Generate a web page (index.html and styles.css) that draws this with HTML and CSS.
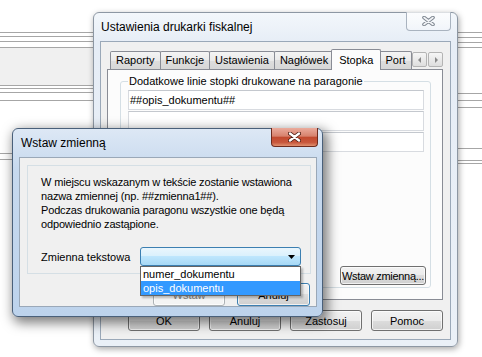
FILE: index.html
```html
<!DOCTYPE html>
<html lang="pl">
<head>
  <meta charset="UTF-8">
  <meta name="viewport" content="width=device-width, initial-scale=1">
  <title>Ustawienia drukarki fiskalnej</title>
  <link rel="stylesheet" href="styles.css">
</head>
<body>
  <!-- Grid of the application behind the windows -->
  <div class="strip strip-left"></div>
  <div class="strip strip-right"></div>

  <!-- Printer settings window (inactive) -->
  <div class="win win-main">
    <div class="titlebar">
      <span class="title">Ustawienia drukarki fiskalnej</span>
      <div class="close close-off">
        <svg width="13" height="10" viewBox="0 0 13 10"><path d="M2 1.5L11 8.5M11 1.5L2 8.5" stroke="#7e8690" stroke-width="3.6" stroke-linecap="round"/><path d="M2 1.5L11 8.5M11 1.5L2 8.5" stroke="#f2f4f7" stroke-width="1.6" stroke-linecap="round"/></svg>
      </div>
    </div>
    <div class="client main-client">
      <div class="tabs">
        <div class="tab">Raporty</div>
        <div class="tab">Funkcje</div>
        <div class="tab">Ustawienia</div>
        <div class="tab">Nagłówek</div>
        <div class="tab tab-on">Stopka</div>
        <div class="tab">Port</div>
        <div class="tab-arrows">
          <span class="arr"><svg width="4" height="6" viewBox="0 0 4 6"><path d="M3 0V6L0 3Z" fill="#8a8a8a"/></svg></span>
          <span class="arr"><svg width="4" height="6" viewBox="0 0 4 6"><path d="M1 0V6L4 3Z" fill="#8a8a8a"/></svg></span>
        </div>
      </div>
      <div class="tabpage">
        <fieldset class="group">
          <legend>Dodatkowe linie stopki drukowane na paragonie</legend>
          <div class="field">##opis_dokumentu##</div>
          <div class="field"></div>
          <div class="field"></div>
          <button class="btn btn-insert">Wstaw zmienną...</button>
        </fieldset>
      </div>
      <div class="buttons">
        <button class="btn">OK</button>
        <button class="btn">Anuluj</button>
        <button class="btn">Zastosuj</button>
        <button class="btn">Pomoc</button>
      </div>
    </div>
  </div>

  <!-- Insert variable dialog (active) -->
  <div class="win win-dialog">
    <div class="titlebar">
      <span class="title">Wstaw zmienną</span>
      <div class="close close-on">
        <svg width="13" height="10" viewBox="0 0 13 10"><path d="M2 1.5L11 8.5M11 1.5L2 8.5" stroke="#4a1a10" stroke-width="4" stroke-linecap="round"/><path d="M2 1.5L11 8.5M11 1.5L2 8.5" stroke="#fff" stroke-width="2.4" stroke-linecap="round"/></svg>
      </div>
    </div>
    <div class="client">
      <div class="dlg-panel">
        <p class="msg">W miejscu wskazanym w tekście zostanie wstawiona<br>nazwa zmiennej (np. ##zmienna1##).<br>Podczas drukowania paragonu wszystkie one będą<br>odpowiednio zastąpione.</p>
        <div class="var-row">
          <span class="var-label">Zmienna tekstowa</span>
          <div class="combo">
            <svg width="7" height="4" viewBox="0 0 7 4"><path d="M0 0H7L3.5 4Z" fill="#000"/></svg>
            <ul class="droplist">
              <li>numer_dokumentu</li>
              <li class="sel">opis_dokumentu</li>
            </ul>
          </div>
        </div>
      </div>
      <div class="dlg-buttons">
        <button class="btn btn-big btn-off">Wstaw</button>
        <button class="btn btn-big btn-default">Anuluj</button>
      </div>
    </div>
  </div>
</body>
</html>
```

FILE: styles.css
```css
/* Page */
body {
  margin: 0;
  width: 482px;
  height: 357px;
  position: relative;
  overflow: hidden;
  background: #fff;
  font-family: "Liberation Sans", Arial, sans-serif;
  font-size: 11px;
  color: #000;
  display: flex;
  justify-content: space-between;
}

/* Background grid lines */
.strip {
  height: 357px;
}

.strip-left {
  width: 93px;
  background:
    linear-gradient(#a6a6a6, #a6a6a6) 0 32px / 100% 1px no-repeat,
    linear-gradient(#a6a6a6, #a6a6a6) 0 36px / 100% 1px no-repeat,
    linear-gradient(#a6a6a6, #a6a6a6) 0 41px / 100% 1px no-repeat,
    linear-gradient(#a6a6a6, #a6a6a6) 0 47px / 100% 1px no-repeat,
    linear-gradient(#a6a6a6, #a6a6a6) 0 85px / 100% 1px no-repeat,
    linear-gradient(#a6a6a6, #a6a6a6) 0 88px / 100% 1px no-repeat,
    linear-gradient(#a6a6a6, #a6a6a6) 0 92px / 100% 1px no-repeat,
    linear-gradient(#a6a6a6, #a6a6a6) 0 100px / 100% 1px no-repeat,
    linear-gradient(#a6a6a6, #a6a6a6) 0 153px / 100% 1px no-repeat,
    linear-gradient(#a6a6a6, #a6a6a6) 0 159px / 100% 1px no-repeat,
    linear-gradient(#f0f0f0, #f0f0f0) 0 48px / 100% 37px no-repeat;
}

.strip-right {
  width: 24px;
  background:
    linear-gradient(#a6a6a6, #a6a6a6) 0 32px / 100% 1px no-repeat,
    linear-gradient(#a6a6a6, #a6a6a6) 0 37px / 100% 1px no-repeat,
    linear-gradient(#a6a6a6, #a6a6a6) 0 42px / 100% 1px no-repeat,
    linear-gradient(#a6a6a6, #a6a6a6) 0 47px / 100% 1px no-repeat,
    linear-gradient(#a6a6a6, #a6a6a6) 0 93px / 100% 1px no-repeat,
    linear-gradient(#a6a6a6, #a6a6a6) 0 100px / 100% 1px no-repeat,
    linear-gradient(#a6a6a6, #a6a6a6) 0 107px / 100% 1px no-repeat,
    linear-gradient(#a6a6a6, #a6a6a6) 0 148px / 100% 1px no-repeat,
    linear-gradient(#a6a6a6, #a6a6a6) 0 160px / 100% 1px no-repeat,
    linear-gradient(#a6a6a6, #a6a6a6) 0 163px / 100% 1px no-repeat;
}

/* Window frames */
.win {
  position: absolute;
  box-sizing: border-box;
  display: flex;
  flex-direction: column;
  border: 1px solid;
  border-radius: 6px;
}

.win-main {
  left: 93px;
  top: 12px;
  width: 365px;
  height: 335px;
  padding: 0 6px 6px;
  border-color: #8d97a3;
  background: linear-gradient(#f3f7fb, #e6edf6 30px, #eaf0f7);
  box-shadow: 1px 2px 6px rgba(0, 0, 0, .35);
}

.win-dialog {
  left: 12px;
  top: 128px;
  width: 311px;
  height: 189px;
  padding: 0 5px 9px 6px;
  border-color: #4a607a;
  background: linear-gradient(#dde8f5, #c7d9ee 40px, #bdd3ec);
  box-shadow: 3px 4px 12px 2px rgba(0, 0, 0, .5);
}

.titlebar {
  height: 28px;
  flex-shrink: 0;
  display: flex;
  justify-content: space-between;
}

.title {
  align-self: center;
  font-size: 12px;
}

.win-main .title {
  padding-left: 1px;
}

.win-dialog .title {
  padding-left: 2px;
}

.close {
  box-sizing: border-box;
  height: 19px;
  margin-top: -1px;
  display: flex;
  align-items: center;
  justify-content: center;
  border: 1px solid;
  border-top: none;
  border-radius: 0 0 4px 4px;
}

.close-off {
  width: 45px;
  border-color: #a9b3bf;
  background: linear-gradient(rgba(255, 255, 255, .7), rgba(255, 255, 255, .25));
}

.close-on {
  width: 47px;
  margin-right: -1px;
  border-color: #6e2b1d;
  background: linear-gradient(#eaab9c, #d7826d 45%, #c24a2f 52%, #c8573c 80%, #e0906f);
}

.client {
  flex: 1;
  display: flex;
  flex-direction: column;
  border: 1px solid #9aa8b8;
  background: #f0f0f0;
}

/* Tabs */
.tabs {
  position: relative;
  z-index: 1;
  height: 21px;
  margin: 7px 7px 0 6px;
  padding-left: 3px;
  display: flex;
  align-items: flex-end;
  overflow: hidden;
}

.tab {
  box-sizing: border-box;
  height: 18px;
  margin: 0 -1px 1px 0;
  padding: 0 5px;
  line-height: 17px;
  white-space: nowrap;
  border: 1px solid #898c95;
  border-bottom: none;
  border-radius: 2px 2px 0 0;
  background: linear-gradient(#f4f4f4, #eaeaea 50%, #dedede 50%, #d7d7d7);
}

.tab-on {
  position: relative;
  z-index: 2;
  height: 21px;
  margin: 0 -2px 0 -2px;
  padding: 0 7px;
  line-height: 20px;
  background: #fcfcfc;
}

.tab-arrows {
  position: absolute;
  z-index: 3;
  right: 0;
  top: 3px;
  display: flex;
  gap: 1px;
}

.arr {
  box-sizing: border-box;
  width: 15px;
  height: 15px;
  display: flex;
  align-items: center;
  justify-content: center;
  border: 1px solid #b4b4b4;
  border-radius: 2px;
  background: linear-gradient(#f6f6f6, #dedede);
}

.tabpage {
  flex: 1;
  margin: -1px 7px 0 6px;
  display: flex;
  flex-direction: column;
  border: 1px solid #898c95;
  background: #fcfcfc;
}

/* Group box */
.group {
  flex: 1;
  min-width: 0;
  margin: 5px 11px 11px 12px;
  padding: 2px 6px 2px 7px;
  display: flex;
  flex-direction: column;
  border: 1px solid #d5dfe5;
  border-radius: 3px;
}

.group legend {
  padding: 0 1px;
  line-height: 13px;
}

.field {
  box-sizing: border-box;
  height: 20px;
  margin-bottom: 1px;
  padding-left: 1px;
  line-height: 18px;
  border: 1px solid #d8dbe0;
  border-top-color: #c4c8ce;
  background: #fff;
}

/* Buttons */
.btn {
  box-sizing: border-box;
  width: 72px;
  height: 21px;
  padding: 0;
  border: 1px solid #707070;
  border-radius: 3px;
  background: linear-gradient(#f2f2f2, #ebebeb 50%, #dddddd 50%, #cfcfcf);
  box-shadow: inset 0 0 0 1px rgba(255, 255, 255, .7);
  font: 11px "Liberation Sans", Arial, sans-serif;
  color: #000;
}

.btn-insert {
  width: 86px;
  height: 19px;
  margin: auto -2px 0 0;
  align-self: flex-end;
  letter-spacing: -0.3px;
  white-space: nowrap;
}

.buttons {
  display: flex;
  justify-content: flex-end;
  gap: 9px;
  margin: 10px 7px 8px 0;
}

/* Insert variable dialog */
.dlg-panel {
  box-sizing: border-box;
  height: 109px;
  margin: 7px 5px 0 7px;
  padding: 9px 0 0 13px;
  border: 1px solid #d5dfe5;
}

.msg {
  margin: 0;
  line-height: 14px;
  letter-spacing: -0.15px;
}

.var-row {
  display: flex;
  align-items: center;
  margin-top: 16px;
}

.var-label {
  width: 99px;
}

.combo {
  position: relative;
  box-sizing: border-box;
  width: 161px;
  height: 19px;
  padding-right: 5px;
  display: flex;
  align-items: center;
  justify-content: flex-end;
  border: 1px solid #3c7fb1;
  border-radius: 3px;
  background: linear-gradient(#eaf6fd, #d9f0fc 50%, #bee6fd 50%, #a7d9f5);
}

.droplist {
  position: absolute;
  z-index: 3;
  top: 18px;
  left: -1px;
  box-sizing: border-box;
  width: 161px;
  margin: 0;
  padding: 0;
  list-style: none;
  border: 1px solid #646464;
  background: #fff;
  box-shadow: 2px 2px 2px rgba(0, 0, 0, .25);
}

.droplist li {
  height: 14px;
  padding-left: 2px;
  line-height: 14px;
}

.droplist .sel {
  background: #3399ff;
  color: #fff;
}

.dlg-buttons {
  display: flex;
  justify-content: flex-end;
  gap: 12px;
  margin: 9px 6px 0 0;
}

.btn-big {
  height: 23px;
}

.btn-default {
  width: 73px;
  border-color: #3c7fb1;
}

.btn-off {
  color: #838383;
  border-color: #adb2b5;
  background: #f4f4f4;
}
```
